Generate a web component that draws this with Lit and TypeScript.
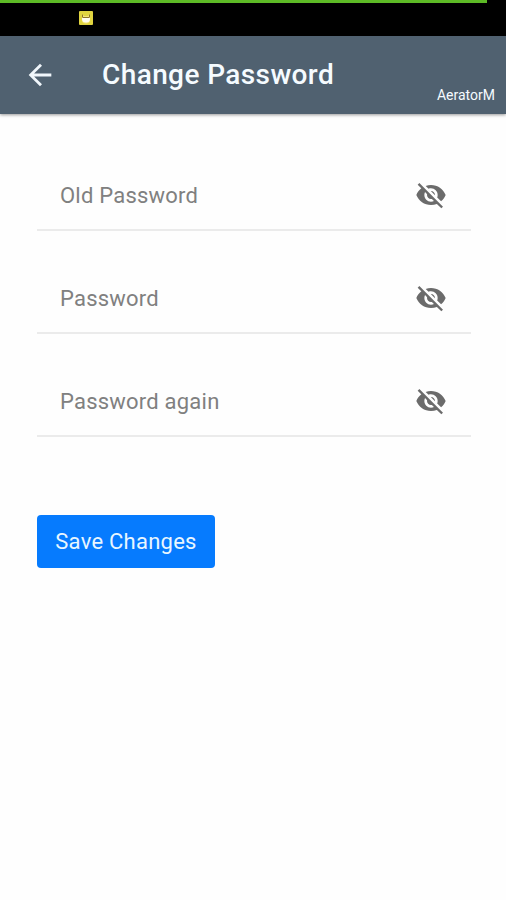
import { LitElement, html, css } from "lit";
import { customElement, property } from "lit/decorators.js";

@customElement("password-field")
class PasswordField extends LitElement {
  @property() label = "";

  static styles = css`
    :host {
      display: flex;
      align-items: center;
      justify-content: space-between;
      box-sizing: border-box;
      height: 71px;
      padding: 0 24px 0 23px;
      border-bottom: 2px solid #ebebeb;
    }
    .label {
      padding-top: 3px;
      font-size: 22px;
      line-height: 28px;
      letter-spacing: 0.22px;
      color: #808080;
      white-space: nowrap;
    }
    .eye {
      display: block;
      width: 32px;
      height: 32px;
      fill: #6b6b6b;
    }
  `;

  render() {
    return html`
      <span class="label">${this.label}</span>
      <svg class="eye" viewBox="0 0 24 24">
        <path d="M12 7c2.76 0 5 2.24 5 5 0 .65-.13 1.26-.36 1.83l2.92 2.92c1.51-1.26 2.7-2.89 3.43-4.75-1.73-4.39-6-7.5-11-7.5-1.4 0-2.74.25-3.98.7l2.16 2.16C10.74 7.13 11.35 7 12 7zM2 4.27l2.28 2.28.46.46C3.08 8.3 1.78 10.02 1 12c1.73 4.39 6 7.5 11 7.5 1.55 0 3.03-.3 4.38-.84l.42.42L19.73 22 21 20.73 3.27 3 2 4.27zM7.53 9.8l1.55 1.55c-.05.21-.08.43-.08.65 0 1.66 1.34 3 3 3 .22 0 .44-.03.65-.08l1.55 1.55c-.67.33-1.41.53-2.2.53-2.76 0-5-2.24-5-5 0-.79.2-1.53.53-2.2zm4.31-.78l3.15 3.15.02-.16c0-1.66-1.34-3-3-3l-.17.01z"/>
      </svg>
    `;
  }
}

@customElement("app-root")
class AppRoot extends LitElement {
  static styles = css`
    :host {
      display: flex;
      flex-direction: column;
      height: 900px;
      overflow: hidden;
      background: #fefefe;
      font-family: Roboto, "Liberation Sans", sans-serif;
    }
    .status {
      height: 36px;
      flex: none;
      background: #000;
    }
    .progress {
      width: 487px;
      height: 3px;
      background: #5dba26;
    }
    .face {
      display: block;
      width: 14px;
      height: 14px;
      margin: 8px 0 0 79px;
    }
    .bar {
      display: flex;
      align-items: center;
      flex: none;
      box-sizing: border-box;
      height: 78px;
      padding: 0 11px 0 23px;
      background: #506170;
      box-shadow: 0 1px 3px rgba(0, 0, 0, 0.4);
      color: #f5fbff;
    }
    .back {
      width: 34px;
      height: 34px;
      fill: #f0f6fb;
    }
    .title {
      margin: 0 auto 0 45px;
      font-size: 28px;
      line-height: 36px;
      font-weight: 500;
      letter-spacing: 0.4px;
      white-space: nowrap;
    }
    .user {
      align-self: flex-end;
      margin-bottom: 11px;
      font-size: 14px;
      line-height: 16px;
    }
    .form {
      display: flex;
      flex-direction: column;
      align-items: stretch;
      gap: 32px;
      padding: 46px 35px 0 37px;
    }
    .save {
      align-self: flex-start;
      box-sizing: border-box;
      width: 178px;
      height: 53px;
      margin-top: 46px;
      padding: 1px 0 0;
      border: 0;
      border-radius: 4px;
      background: #067bfe;
      color: #e8f6ff;
      font: 400 22px/52px Roboto, "Liberation Sans", sans-serif;
      letter-spacing: 0.25px;
      white-space: nowrap;
    }
  `;

  render() {
    const labels = ["Old Password", "Password", "Password again"];
    return html`
      <div class="status">
        <div class="progress"></div>
        <svg class="face" viewBox="0 0 14 14">
          <rect width="14" height="14" rx="1" fill="#e0d440" />
          <path d="M3 3l2 2h4l2-2v6a4 3.5 0 0 1-8 0z" fill="#f4e47a" />
          <path d="M3.5 3.5v3M10.5 3.5v3M4 6.5h6" stroke="#8b7528" stroke-width="1" fill="none" />
          <path d="M3 7h8v1a4 3.5 0 0 1-8 0z" fill="#fffdf0" />
        </svg>
      </div>
      <header class="bar">
        <svg class="back" viewBox="0 0 24 24">
          <path d="M20 11H7.83l5.59-5.59L12 4l-8 8 8 8 1.41-1.41L7.83 13H20v-2z" />
        </svg>
        <div class="title">Change Password</div>
        <div class="user">AeratorM</div>
      </header>
      <main class="form">
        ${labels.map((l) => html`<password-field .label=${l}></password-field>`)}
        <button class="save">Save Changes</button>
      </main>
    `;
  }
}
